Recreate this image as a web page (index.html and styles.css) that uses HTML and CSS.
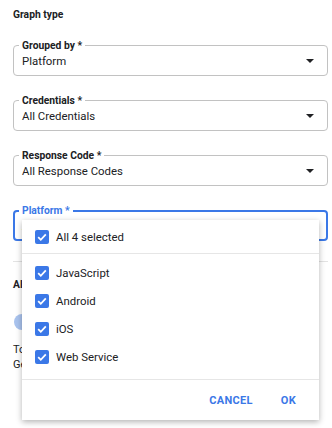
FILE: index.html
```html
<!DOCTYPE html>
<html lang="en">

<head>
    <meta charset="utf-8">
    <meta name="viewport" content="width=device-width, initial-scale=1.0">
    <title>Graph settings</title>
    <link rel="stylesheet" href="styles.css">
</head>

<body>
    <section class="panel">
        <h3 class="section-title">Graph type</h3>

        <div class="field">
            <span class="field-label">Grouped by *</span>
            <span class="field-value">Platform</span>
            <span class="arrow"></span>
        </div>

        <div class="field">
            <span class="field-label">Credentials *</span>
            <span class="field-value">All Credentials</span>
            <span class="arrow"></span>
        </div>

        <div class="field">
            <span class="field-label">Response Code *</span>
            <span class="field-value">All Response Codes</span>
            <span class="arrow"></span>
        </div>

        <div class="select-wrap">
            <div class="field focused">
                <span class="field-label">Platform *</span>
                <span class="field-value">All Platforms</span>
                <span class="arrow"></span>
            </div>

            <div class="menu">
                <div class="menu-all">
                    <span class="check"><svg viewBox="0 0 14 14"><path d="M3.2 7.2l2.6 2.6 5-5.4" /></svg></span>
                    All 4 selected
                </div>
                <ul class="menu-list">
                    <li><span class="check"><svg viewBox="0 0 14 14"><path d="M3.2 7.2l2.6 2.6 5-5.4" /></svg></span>JavaScript</li>
                    <li><span class="check"><svg viewBox="0 0 14 14"><path d="M3.2 7.2l2.6 2.6 5-5.4" /></svg></span>Android</li>
                    <li><span class="check"><svg viewBox="0 0 14 14"><path d="M3.2 7.2l2.6 2.6 5-5.4" /></svg></span>iOS</li>
                    <li><span class="check"><svg viewBox="0 0 14 14"><path d="M3.2 7.2l2.6 2.6 5-5.4" /></svg></span>Web Service</li>
                </ul>
                <div class="menu-actions">
                    <button class="text-btn">CANCEL</button>
                    <button class="text-btn">OK</button>
                </div>
            </div>
        </div>

        <hr class="divider">

        <h3 class="section-title">Alerts</h3>
        <div class="slider">
            <span class="thumb"></span>
        </div>
        <p class="hint">To compare platforms, enable alerts.<br>Generated graphs update hourly.</p>
    </section>
</body>

</html>
```

FILE: styles.css
```css
body {
    margin: 0;
    height: 428px;
    overflow: hidden;
    background-color: #ffffff;
    font-family: Roboto, "Liberation Sans", sans-serif;
    color: #202124;
}

.panel {
    padding: 8px 4px 0 13px;
}

.section-title {
    margin: 0;
    font-size: 10.3px;
    line-height: 14px;
    font-weight: bold;
}

.field {
    position: relative;
    display: flex;
    align-items: center;
    height: 31px;
    box-sizing: border-box;
    margin-top: 24px;
    padding: 0 13px 0 8px;
    border: 1px solid #c2c2c2;
    border-radius: 4px;
}

.panel > .section-title + .field {
    margin-top: 23px;
}

.field-label {
    position: absolute;
    top: -7px;
    left: 5px;
    padding: 0 3px;
    background-color: #ffffff;
    font-size: 10.3px;
    line-height: 14px;
    font-weight: bold;
}

.field-value {
    flex: 1;
    font-size: 11.4px;
}

.arrow {
    width: 0;
    height: 0;
    border-left: 4px solid transparent;
    border-right: 4px solid transparent;
    border-top: 4px solid #202124;
}

.select-wrap {
    position: relative;
}

.field.focused {
    border: 2px solid #3b78e7;
    padding-left: 7px;
}

.field.focused .field-label {
    top: -8px;
    left: 4px;
    color: #3b78e7;
}

.menu {
    position: absolute;
    top: 10px;
    left: 9px;
    width: 297px;
    background-color: #ffffff;
    box-shadow: 0 2px 6px rgba(0, 0, 0, .3);
    z-index: 2;
    font-size: 11.4px;
}

.menu-all {
    display: flex;
    align-items: center;
    height: 33px;
    padding-left: 13px;
    border-bottom: 1px solid #e6e6e6;
}

.menu-list {
    list-style: none;
    margin: 0;
    padding: 5px 0 8px;
    border-bottom: 1px solid #e6e6e6;
}

.menu-list li {
    display: flex;
    align-items: center;
    height: 28px;
    padding-left: 13px;
}

.check {
    display: flex;
    width: 14px;
    height: 14px;
    margin-right: 7px;
    border-radius: 2px;
    background-color: #3b78e7;
}

.check svg {
    width: 14px;
    height: 14px;
    fill: none;
    stroke: #ffffff;
    stroke-width: 1.8;
}

.menu-actions {
    display: flex;
    justify-content: flex-end;
    align-items: center;
    gap: 20px;
    height: 40px;
    padding-right: 19px;
}

.text-btn {
    padding: 4px 4px;
    border: none;
    background: none;
    color: #3b78e7;
    font-family: Roboto, "Liberation Sans", sans-serif;
    font-size: 11px;
    font-weight: bold;
    letter-spacing: .3px;
}

.divider {
    margin: 20px 0 16px;
    border: none;
    border-top: 1px solid #e3e3e3;
}

.slider {
    position: relative;
    height: 16px;
    margin-top: 22px;
}

.thumb {
    position: absolute;
    left: 1px;
    top: 0;
    width: 16px;
    height: 16px;
    border-radius: 50%;
    background-color: #a9c3ee;
}

.hint {
    margin: 12px 0 0;
    font-size: 11px;
    line-height: 15px;
}
```
